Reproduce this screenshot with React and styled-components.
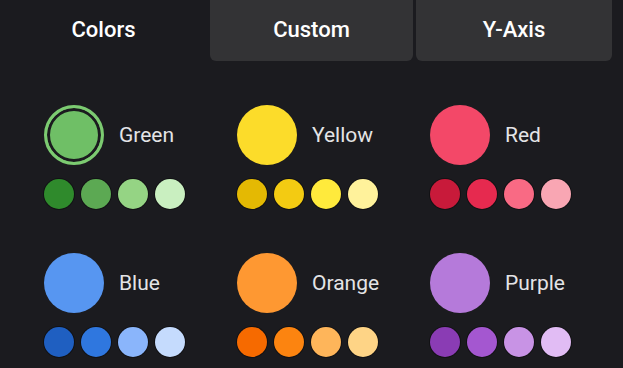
import React from 'react'
import styled, { createGlobalStyle } from 'styled-components'

const GlobalStyle = createGlobalStyle`
  html, body {
    margin: 0;
    padding: 0;
    background: #1b1b1f;
    font-family: Roboto, "Liberation Sans", sans-serif;
    overflow: hidden;
  }
`

const Page = styled.div`
  width: 623px;
  height: 368px;
  background: #1b1b1f;
`

const TabBar = styled.div`
  display: flex;
  height: 61px;
  padding-right: 11px;
  gap: 3px;
`

const Tab = styled.div`
  flex: ${p => (p.$grow ? p.$grow : 1)};
  display: flex;
  align-items: center;
  justify-content: center;
  color: #ffffff;
  font-size: 22px;
  font-weight: 500;
  background: ${p => (p.$active ? 'transparent' : '#333335')};
  border-radius: 0 0 6px 6px;
  padding-bottom: 3px;
`

const Grid = styled.div`
  display: grid;
  grid-template-columns: repeat(3, 193px);
  row-gap: 44px;
  padding: 44px 0 0 44px;
`

const Swatch = styled.div`
  display: flex;
  flex-direction: column;
  gap: 14px;
`

const Head = styled.div`
  display: flex;
  align-items: center;
  gap: 15px;
`

const Big = styled.div`
  width: 60px;
  height: 60px;
  border-radius: 50%;
  box-sizing: border-box;
  background: ${p => p.$color};
  ${p =>
    p.$selected &&
    `
    border: 3px solid ${p.$ring};
    box-shadow: inset 0 0 0 3px #1b1b1f;
  `}
`

const Label = styled.span`
  color: #e4e4e6;
  font-size: 21px;
`

const Shades = styled.div`
  display: flex;
  gap: 7px;
`

const Dot = styled.div`
  width: 30px;
  height: 30px;
  border-radius: 50%;
  background: ${p => p.$color};
  box-shadow: 0 0 0 1px rgba(0, 0, 0, 0.35);
`

const palettes = [
  { name: 'Green', main: '#6fbf66', ring: '#7ccb71', selected: true, shades: ['#2f8a2c', '#5ca953', '#95d484', '#c9efc0'] },
  { name: 'Yellow', main: '#fcdc2a', shades: ['#e4b903', '#f3cb12', '#ffea3c', '#fff29b'] },
  { name: 'Red', main: '#f34868', shades: ['#c81a3a', '#e62a4f', '#f96a84', '#f9a6b3'] },
  { name: 'Blue', main: '#5796f1', shades: ['#1f5fc1', '#2f77df', '#8ab5fb', '#c5dbfd'] },
  { name: 'Orange', main: '#fe9832', shades: ['#f66a00', '#fc8410', '#feb55a', '#fed486'] },
  { name: 'Purple', main: '#b57ada', shades: ['#8a3cb4', '#a457d0', '#c893e5', '#e1bcf4'] },
]

export default function App() {
  return (
    <Page>
      <GlobalStyle />
      <TabBar>
        <Tab $active $grow={207}>Colors</Tab>
        <Tab $grow={203}>Custom</Tab>
        <Tab $grow={196}>Y-Axis</Tab>
      </TabBar>
      <Grid>
        {palettes.map(p => (
          <Swatch key={p.name}>
            <Head>
              <Big $color={p.main} $ring={p.ring} $selected={p.selected} />
              <Label>{p.name}</Label>
            </Head>
            <Shades>
              {p.shades.map(c => (
                <Dot key={c} $color={c} />
              ))}
            </Shades>
          </Swatch>
        ))}
      </Grid>
    </Page>
  )
}
